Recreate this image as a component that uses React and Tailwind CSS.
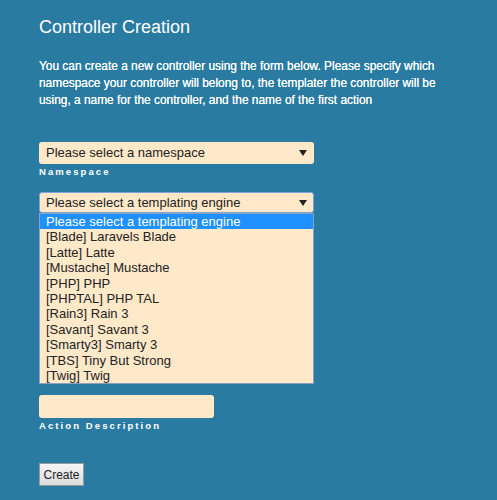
// Formulário de criação de controller, com a lista do motor de templates aberta.
const MOTORES = [
  'Please select a templating engine',
  '[Blade] Laravels Blade',
  '[Latte] Latte',
  '[Mustache] Mustache',
  '[PHP] PHP',
  '[PHPTAL] PHP TAL',
  '[Rain3] Rain 3',
  '[Savant] Savant 3',
  '[Smarty3] Smarty 3',
  '[TBS] Tiny But Strong',
  '[Twig] Twig',
];

const FONTE = { fontFamily: '"Liberation Sans", Arial, sans-serif' };

function Seta() {
  return (
    <svg width="8" height="6" viewBox="0 0 8 6" className="shrink-0">
      <path d="M0 0h8L4 6z" fill="#222" />
    </svg>
  );
}

function Rotulo({ children }) {
  return (
    <div className="mt-[3px] text-[9.5px] font-bold leading-[10px] tracking-[0.22em] text-white">
      {children}
    </div>
  );
}

export default function App() {
  return (
    <div
      className="min-h-[500px] w-full bg-[#2a7ba1] pl-[39px] pr-4 pt-[16px] text-white"
      style={FONTE}
    >
      <h1 className="text-[18px] leading-[22px]">Controller Creation</h1>

      <p className="mt-[20px] w-[420px] text-[11.9px] leading-[17px] [text-shadow:0_0_0.5px_#fff]">
        You can create a new controller using the form below. Please specify which namespace your
        controller will belong to, the templater the controller will be using, a name for the
        controller, and the name of the first action
      </p>

      <div className="mt-[33px] w-[275px]">
        <div className="flex h-[22px] items-center justify-between rounded-[3px] bg-[#ffe9c9] pl-[7px] pr-[7px] text-[13px] text-[#222]">
          <span>Please select a namespace</span>
          <Seta />
        </div>
        <Rotulo>Namespace</Rotulo>
      </div>

      {/* Select aberto: a lista cobre os campos que vêm logo abaixo */}
      <div className="relative mt-[15px] h-[203px] w-[275px]">
        <div className="flex h-[21px] items-center justify-between rounded-[3px] border border-[#7ea3d9] bg-[#ffe9c9] pl-[6px] pr-[6px] text-[13px] text-[#222]">
          <span>Please select a templating engine</span>
          <Seta />
        </div>

        <ul className="absolute left-0 top-[21px] z-10 w-[275px] border border-[#8c9fbf] bg-[#ffe9c9] text-[13px] leading-[15.4px] text-[#222]">
          {MOTORES.map((m, i) => (
            <li key={m} className={'pl-[6px] ' + (i === 0 ? 'bg-[#1e90ff] text-white' : '')}>
              {m}
            </li>
          ))}
        </ul>
      </div>

      <div className="w-[175px]">
        <div className="h-[23px] rounded-[3px] bg-[#ffe9c9]" />
        <Rotulo>Action Description</Rotulo>
      </div>

      <button
        type="button"
        className="mt-[32px] h-[23px] w-[45px] border border-[#9a9a9a] bg-gradient-to-b from-[#f6f6f6] to-[#dcdcdc] text-[12px] text-[#222]"
      >
        Create
      </button>
    </div>
  );
}
